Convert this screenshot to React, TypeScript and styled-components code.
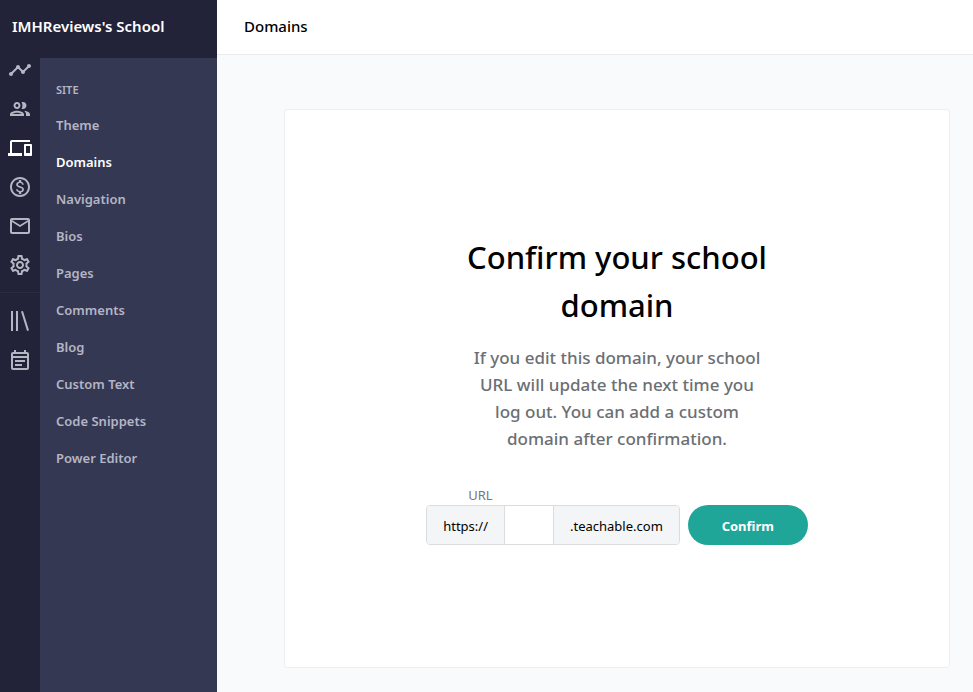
import React from "react";
import styled, { createGlobalStyle } from "styled-components";
import {
  MdTimeline,
  MdOutlineDevices,
  MdOutlineMonetizationOn,
  MdOutlineMail,
  MdOutlineSettings,
  MdOutlineEventNote,
} from "react-icons/md";

const GlobalStyle = createGlobalStyle`
  *, *::before, *::after { box-sizing: border-box; }
  body {
    margin: 0;
    background: #f9fafc;
    color: #000;
    font-family: "Segoe UI", "Noto Sans", "Open Sans", sans-serif;
    font-size: 14px;
  }
`;

const Page = styled.div`
  display: flex;
  min-height: 100vh;
`;

const Sidebar = styled.aside`
  display: flex;
  flex-direction: column;
  flex: none;
  width: 217px;
  background: #222338;
`;

const SchoolName = styled.a`
  display: flex;
  align-items: center;
  height: 58px;
  padding: 0 12px 6px;
  color: #fff;
  font-size: 15px;
  font-weight: 600;
  text-decoration: none;
  white-space: nowrap;
`;

const SidebarBody = styled.div`
  display: flex;
  flex: 1;
`;

const Rail = styled.nav`
  display: flex;
  flex-direction: column;
  width: 40px;
`;

const RailGroup = styled.div`
  display: flex;
  flex-direction: column;
  align-items: center;
  gap: 15px;

  & + & {
    gap: 16px;
    margin-top: 15px;
    padding-top: 16px;
    border-top: 1px solid #2b2c44;
  }
`;

const RailLink = styled.a<{ $active?: boolean }>`
  display: flex;
  width: 24px;
  height: 24px;
  color: ${(p) => (p.$active ? "#fff" : "#b5b6c4")};
`;

const Menu = styled.nav`
  flex: 1;
  padding: 22px 16px;
  background: #353853;
`;

const MenuHeading = styled.h2`
  margin: 0 0 7px;
  color: #b4b5c5;
  font-size: 11px;
  font-weight: 600;
  line-height: 20px;
`;

const MenuList = styled.ul`
  margin: 0;
  padding: 0;
  list-style: none;
`;

const MenuLink = styled.a<{ $active?: boolean }>`
  display: block;
  color: ${(p) => (p.$active ? "#fff" : "#b4b5c5")};
  font-size: 13px;
  font-weight: 600;
  line-height: 37px;
  text-decoration: none;
`;

const Main = styled.main`
  display: flex;
  flex: 1;
  flex-direction: column;
  min-width: 0;
`;

const TopBar = styled.header`
  display: flex;
  align-items: center;
  height: 55px;
  padding: 0 27px 2px;
  border-bottom: 1px solid #e9ecee;
  background: #fff;
`;

const PageTitle = styled.h1`
  margin: 0;
  font-size: 15px;
  font-weight: 500;
`;

const Content = styled.div`
  display: flex;
  flex: 1;
  padding: 54px 23px 24px 67px;
`;

const Card = styled.section`
  display: flex;
  flex: 1;
  flex-direction: column;
  align-items: center;
  justify-content: center;
  padding: 24px;
  border: 1px solid #eceff1;
  border-radius: 3px;
  background: #fff;
`;

const CardTitle = styled.h2`
  max-width: 320px;
  margin: 0;
  font-size: 31px;
  font-weight: 500;
  line-height: 48px;
  text-align: center;
`;

const CardText = styled.p`
  max-width: 296px;
  margin: 15px 0 33px;
  color: #6b6f74;
  font-size: 17px;
  font-weight: 500;
  line-height: 27px;
  text-align: center;
`;

const Form = styled.form`
  display: flex;
  align-items: flex-end;
  gap: 8px;
`;

const Field = styled.div`
  display: flex;
  flex-direction: column;
`;

const FieldLabel = styled.label`
  padding-left: 42px;
  color: #777;
  font-size: 13px;
  line-height: 20px;
`;

const InputGroup = styled.div`
  display: flex;
  height: 40px;
  overflow: hidden;
  border: 1px solid #dadddf;
  border-radius: 4px;
`;

const Affix = styled.span`
  display: flex;
  align-items: center;
  padding: 2px 16px 0;
  background: #f3f5f6;
  font-size: 13px;
`;

const UrlInput = styled.input`
  width: 50px;
  padding: 0 8px;
  border: solid #dadddf;
  border-width: 0 1px;
  background: #fff;
  font: inherit;
`;

const ConfirmButton = styled.button`
  width: 120px;
  height: 40px;
  padding: 2px 0 0;
  border: 0;
  border-radius: 20px;
  background: #20a698;
  color: #fff;
  font: inherit;
  font-size: 13px;
  font-weight: 700;
  cursor: pointer;
`;

function PeopleIcon() {
  return (
    <svg width="24" height="24" viewBox="0 0 24 24" fill="currentColor">
      <path d="M9 13.75c-2.34 0-7 1.17-7 3.5V19h14v-1.75c0-2.33-4.66-3.5-7-3.5zM4.34 17c.84-.58 2.87-1.25 4.66-1.25s3.82.67 4.66 1.25H4.34zM9 12c1.93 0 3.5-1.57 3.5-3.5S10.93 5 9 5 5.5 6.57 5.5 8.5 7.07 12 9 12zm0-5c.83 0 1.5.67 1.5 1.5S9.83 10 9 10s-1.5-.67-1.5-1.5S8.17 7 9 7zm7.04 6.81c1.16.84 1.96 1.96 1.96 3.44V19h4v-1.75c0-2.02-3.5-3.17-5.96-3.44zM15 12c1.93 0 3.5-1.57 3.5-3.5S16.93 5 15 5c-.54 0-1.04.13-1.5.35.63.89 1 1.98 1 3.15s-.37 2.26-1 3.15c.46.22.96.35 1.5.35z" />
    </svg>
  );
}

function LibraryIcon() {
  return (
    <svg width="24" height="24" viewBox="0 0 24 24" fill="none" stroke="currentColor" strokeWidth="2">
      <path d="M4 2v20M9 2v20M14 2.2l6 19.4" />
    </svg>
  );
}

const schoolLinks = [
  { label: "Dashboard", icon: <MdTimeline size={24} /> },
  { label: "Users", icon: <PeopleIcon /> },
  { label: "Site", icon: <MdOutlineDevices size={24} />, active: true },
  { label: "Sales", icon: <MdOutlineMonetizationOn size={24} /> },
  { label: "Emails", icon: <MdOutlineMail size={24} /> },
  { label: "Settings", icon: <MdOutlineSettings size={24} /> },
];

const productLinks = [
  { label: "Courses", icon: <LibraryIcon /> },
  { label: "Coaching", icon: <MdOutlineEventNote size={24} /> },
];

const menuItems = [
  "Theme",
  "Domains",
  "Navigation",
  "Bios",
  "Pages",
  "Comments",
  "Blog",
  "Custom Text",
  "Code Snippets",
  "Power Editor",
];

export default function App() {
  return (
    <>
      <GlobalStyle />
      <Page>
        <Sidebar>
          <SchoolName href="#">IMHReviews's School</SchoolName>
          <SidebarBody>
            <Rail aria-label="Main">
              <RailGroup>
                {schoolLinks.map((l) => (
                  <RailLink key={l.label} href="#" aria-label={l.label} $active={l.active}>
                    {l.icon}
                  </RailLink>
                ))}
              </RailGroup>
              <RailGroup>
                {productLinks.map((l) => (
                  <RailLink key={l.label} href="#" aria-label={l.label}>
                    {l.icon}
                  </RailLink>
                ))}
              </RailGroup>
            </Rail>
            <Menu aria-label="Site">
              <MenuHeading>SITE</MenuHeading>
              <MenuList>
                {menuItems.map((item) => (
                  <li key={item}>
                    <MenuLink href="#" $active={item === "Domains"}>
                      {item}
                    </MenuLink>
                  </li>
                ))}
              </MenuList>
            </Menu>
          </SidebarBody>
        </Sidebar>
        <Main>
          <TopBar>
            <PageTitle>Domains</PageTitle>
          </TopBar>
          <Content>
            <Card>
              <CardTitle>Confirm your school domain</CardTitle>
              <CardText>
                If you edit this domain, your school URL will update the next time you log out. You can add a
                custom domain after confirmation.
              </CardText>
              <Form onSubmit={(e) => e.preventDefault()}>
                <Field>
                  <FieldLabel htmlFor="school-url">URL</FieldLabel>
                  <InputGroup>
                    <Affix>https://</Affix>
                    <UrlInput id="school-url" type="text" />
                    <Affix>.teachable.com</Affix>
                  </InputGroup>
                </Field>
                <ConfirmButton type="submit">Confirm</ConfirmButton>
              </Form>
            </Card>
          </Content>
        </Main>
      </Page>
    </>
  );
}
